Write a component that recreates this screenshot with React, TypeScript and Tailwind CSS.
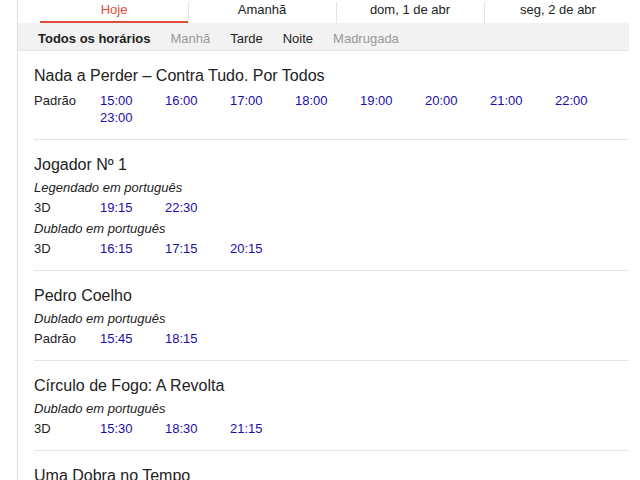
const TABS = ["Hoje", "Amanhã", "dom, 1 de abr", "seg, 2 de abr"];

const FILTERS = [
  { label: "Todos os horários", cls: "font-bold text-[#222]" },
  { label: "Manhã", cls: "text-[#999]" },
  { label: "Tarde", cls: "text-[#222]" },
  { label: "Noite", cls: "text-[#222]" },
  { label: "Madrugada", cls: "text-[#999]" },
];

interface Showing {
  lang?: string;
  format: string;
  times: string[];
}

interface Movie {
  title: string;
  showings: Showing[];
}

const MOVIES: Movie[] = [
  {
    title: "Nada a Perder – Contra Tudo. Por Todos",
    showings: [
      {
        format: "Padrão",
        times: ["15:00", "16:00", "17:00", "18:00", "19:00", "20:00", "21:00", "22:00", "23:00"],
      },
    ],
  },
  {
    title: "Jogador Nº 1",
    showings: [
      { lang: "Legendado em português", format: "3D", times: ["19:15", "22:30"] },
      { lang: "Dublado em português", format: "3D", times: ["16:15", "17:15", "20:15"] },
    ],
  },
  {
    title: "Pedro Coelho",
    showings: [{ lang: "Dublado em português", format: "Padrão", times: ["15:45", "18:15"] }],
  },
  {
    title: "Círculo de Fogo: A Revolta",
    showings: [{ lang: "Dublado em português", format: "3D", times: ["15:30", "18:30", "21:15"] }],
  },
  {
    title: "Uma Dobra no Tempo",
    showings: [{ lang: "Dublado em português", format: "3D", times: ["14:00", "16:30"] }],
  },
];

export default function App() {
  return (
    <div className="w-[640px] h-[480px] overflow-hidden bg-white font-['Liberation_Sans',Arial,sans-serif] text-[13px] text-[#222]">
      <div className="ml-[17px] w-[612px] min-h-[480px] border-l border-[#ddd]">
        {/* Day tabs */}
        <div className="flex pl-[22px] h-[23px]">
          {TABS.map((t, i) => (
            <div
              key={t}
              className={`relative shrink-0 w-[148px] flex items-center justify-center pb-[3px] ${
                i === 0 ? "text-[#dd4b39]" : "text-[#222]"
              }`}
            >
              {i > 0 && <div className="absolute left-0 top-[2px] bottom-0 w-px bg-[#e5e5e5]" />}
              {t}
              {i === 0 && <div className="absolute left-0 right-0 bottom-0 h-[2px] bg-[#dd4b39]" />}
            </div>
          ))}
        </div>

        {/* Time of day filter */}
        <div className="h-[28px] w-[611px] bg-[#f2f2f2] border-b border-[#e5e5e5] flex items-center gap-5 pl-5 pt-[3px] leading-[17px]">
          {FILTERS.map((f) => (
            <span key={f.label} className={f.cls}>
              {f.label}
            </span>
          ))}
        </div>

        {/* Movies */}
        <div className="pl-4 w-[611px]">
          {MOVIES.map((m) => (
            <div key={m.title} className="pt-[15px] pb-[10px] border-b border-[#e5e5e5]">
              <div className="text-[16px] leading-[20px] mb-[3px]">{m.title}</div>
              {m.showings.map((s, i) => (
                <div key={i}>
                  {s.lang && <div className="italic leading-[17px] pt-[1px]">{s.lang}</div>}
                  <div className="flex py-[3px] leading-[17px]">
                    <div className="w-[66px] shrink-0">{s.format}</div>
                    <div className="flex flex-wrap flex-1">
                      {s.times.map((t) => (
                        <span key={t} className="w-[65px] text-[#1a0dab]">
                          {t}
                        </span>
                      ))}
                    </div>
                  </div>
                </div>
              ))}
            </div>
          ))}
        </div>
      </div>
    </div>
  );
}
